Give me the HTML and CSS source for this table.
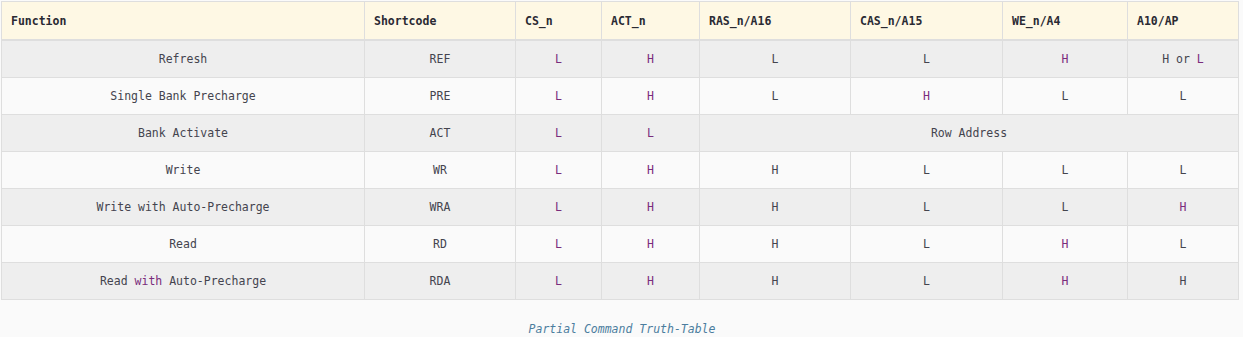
FILE: index.html
```html
<!DOCTYPE html>
<html>
<head>
<meta charset="utf-8">
<link rel="stylesheet" href="styles.css">
</head>
<body>
<figure class="fig">
<table class="truth">
  <colgroup>
    <col class="c-fn"><col class="c-sc"><col class="c-cs"><col class="c-act"><col class="c-ras"><col class="c-cas"><col class="c-we"><col class="c-ap">
  </colgroup>
  <thead>
    <tr><th>Function</th><th>Shortcode</th><th>CS_n</th><th>ACT_n</th><th>RAS_n/A16</th><th>CAS_n/A15</th><th>WE_n/A4</th><th>A10/AP</th></tr>
  </thead>
  <tbody>
    <tr><td>Refresh</td><td>REF</td><td class="k">L</td><td class="k">H</td><td>L</td><td>L</td><td class="k">H</td><td>H or <span class="k">L</span></td></tr>
    <tr><td>Single Bank Precharge</td><td>PRE</td><td class="k">L</td><td class="k">H</td><td>L</td><td class="k">H</td><td>L</td><td>L</td></tr>
    <tr><td>Bank Activate</td><td>ACT</td><td class="k">L</td><td class="k">L</td><td colspan="4">Row Address</td></tr>
    <tr><td>Write</td><td>WR</td><td class="k">L</td><td class="k">H</td><td>H</td><td>L</td><td>L</td><td>L</td></tr>
    <tr><td>Write with Auto-Precharge</td><td>WRA</td><td class="k">L</td><td class="k">H</td><td>H</td><td>L</td><td>L</td><td class="k">H</td></tr>
    <tr><td>Read</td><td>RD</td><td class="k">L</td><td class="k">H</td><td>H</td><td>L</td><td class="k">H</td><td>L</td></tr>
    <tr><td>Read <span class="k">with</span> Auto-Precharge</td><td>RDA</td><td class="k">L</td><td class="k">H</td><td>H</td><td>L</td><td class="k">H</td><td>H</td></tr>
  </tbody>
</table>
<figcaption class="cap">Partial Command Truth-Table</figcaption>
</figure>
</body>
</html>
```
FILE: styles.css
```css
html, body {
  margin: 0;
  padding: 0;
  background: #fafafa;
}
body {
  font-family: "DejaVu Sans Mono", "Liberation Mono", monospace;
  font-size: 11.5px;
  color: #44444e;
}
.fig {
  margin: 0;
  padding: 1px 0 0 1px;
}
.truth {
  border-collapse: collapse;
  table-layout: fixed;
  width: 1237px;
}
.c-fn { width: 363px; }
.c-sc { width: 151px; }
.c-cs { width: 86px; }
.c-act { width: 98px; }
.c-ras { width: 151px; }
.c-cas { width: 152px; }
.c-we { width: 125px; }
.c-ap { width: 111px; }
.truth th {
  background: #fef8e4;
  color: #2a2a33;
  font-weight: bold;
  text-align: left;
  padding: 0 9px;
  height: 37px;
  border: 1px solid #dedede;
  border-bottom: 2px solid #dedede;
}
.truth td {
  text-align: center;
  height: 36px;
  padding: 0 8px;
  border: 1px solid #dedede;
}
.truth tbody tr:nth-child(odd) td { background: #eeeeee; }
.truth tbody tr:nth-child(even) td { background: #fafafa; }
.k { color: #7a2c7c; }
.cap {
  margin: 22px 0 0;
  text-align: center;
  font-style: italic;
  color: #4b7d9e;
  font-size: 11.5px;
}
```
